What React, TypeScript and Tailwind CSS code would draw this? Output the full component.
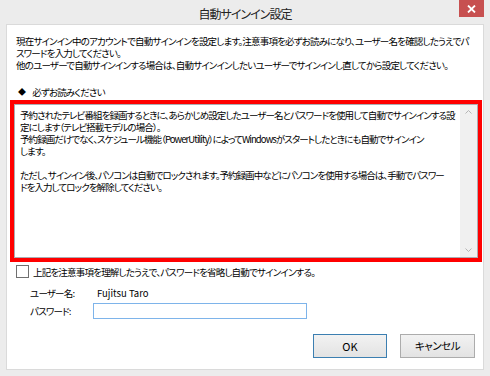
export default function App() {
  return (
    <div className="w-[490px] h-[376px] bg-[#ececec] flex flex-col font-['Noto_Sans_CJK_JP',sans-serif] [font-feature-settings:'palt'] text-black overflow-hidden">
      <div className="relative h-[24px] shrink-0 flex items-center justify-center text-[12px] tracking-[-1px] text-[#222]">
        <span className="mt-[3px]">自動サインイン設定</span>
        <div className="absolute right-[6px] top-0 w-[25px] h-[17px] bg-[#c75050] flex items-center justify-center">
          <svg width="9" height="8" viewBox="0 0 9 8">
            <path d="M1 0.5 L8 7.5 M8 0.5 L1 7.5" stroke="white" strokeWidth="1.8" />
          </svg>
        </div>
      </div>
      <div className="mx-[6px] h-[346px] shrink-0 bg-white border border-[#dadada] flex flex-col px-[3px] pt-[10px] text-[9.5px] tracking-[-0.8px] leading-[12px]">
        <div className="pl-[6px] whitespace-nowrap">
          現在サインイン中のアカウントで自動サインインを設定します。注意事項を必ずお読みになり、ユーザー名を確認したうえでパ
          <br />
          スワードを入力してください。
          <br />
          他のユーザーで自動サインインする場合は、自動サインインしたいユーザーでサインインし直してから設定してください。
        </div>
        <div className="pl-[8px] mt-[15px] flex items-center gap-[7px] whitespace-nowrap">
          <span className="text-[8px]">◆</span>
          <span>必ずお読みください</span>
        </div>
        <div className="mt-[2px] w-[472px] h-[162px] shrink-0 border-4 border-[#ff0000] flex">
          <div className="flex-1 min-w-0 border border-[#abadb3] flex">
            <div className="flex-1 min-w-0 overflow-hidden pl-[5px] pt-[4px] whitespace-nowrap tracking-[-0.92px]">
              予約されたテレビ番組を録画するときに、あらかじめ設定したユーザー名とパスワードを使用して自動でサインインする設
              <br />
              定にします（テレビ搭載モデルの場合）。
              <br />
              予約録画だけでなく、スケジュール機能（PowerUtility）によってWindowsがスタートしたときにも自動でサインイン
              <br />
              します。
              <br />
              <br />
              ただし、サインイン後、パソコンは自動でロックされます。予約録画中などにパソコンを使用する場合は、手動でパスワー
              <br />
              ドを入力してロックを解除してください。
            </div>
            <div className="w-[17px] shrink-0 bg-[#f0f0f0] flex flex-col justify-between items-center py-[5px]">
              <svg width="7" height="4" viewBox="0 0 7 4">
                <path d="M0.5 3.5 L3.5 0.5 L6.5 3.5" stroke="#b5b5b5" fill="none" strokeWidth="1" />
              </svg>
              <svg width="7" height="4" viewBox="0 0 7 4">
                <path d="M0.5 0.5 L3.5 3.5 L6.5 0.5" stroke="#b5b5b5" fill="none" strokeWidth="1" />
              </svg>
            </div>
          </div>
        </div>
        <div className="mt-[3px] pl-[6px] flex items-center gap-[4px] whitespace-nowrap">
          <div className="w-[13px] h-[13px] border border-[#707070] bg-white" />
          <span>上記を注意事項を理解したうえで、パスワードを省略し自動でサインインする。</span>
        </div>
        <div className="mt-[9px] pl-[20px] flex items-center whitespace-nowrap">
          <span className="w-[63px]">ユーザー名:</span>
          <span className="pl-[4px] tracking-[0px]">Fujitsu Taro</span>
        </div>
        <div className="mt-[4px] pl-[20px] flex items-center whitespace-nowrap">
          <span className="w-[63px]">パスワード:</span>
          <div className="w-[214px] h-[16px] border border-[#7eb4ea] bg-white" />
        </div>
        <div className="mt-[15px] pr-[5px] flex justify-end gap-[13px] tracking-normal">
          <button className="w-[74px] h-[24px] border border-[#3c7fb1] bg-gradient-to-b from-[#f2f2f2] to-[#e3e3e3] text-[11px]">OK</button>
          <button className="w-[75px] h-[24px] border border-[#acacac] bg-gradient-to-b from-[#f2f2f2] to-[#e3e3e3] text-[10.5px] tracking-[-0.5px]">キャンセル</button>
        </div>
      </div>
    </div>
  );
}
